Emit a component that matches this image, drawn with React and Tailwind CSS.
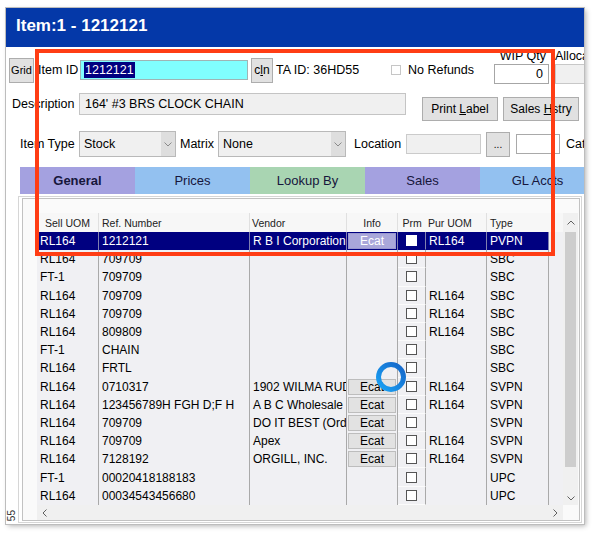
import React from 'react';

const rows = [
  ['RL164', '1212121', 'R B I Corporation', true, true, 'RL164', 'PVPN'],
  ['RL164', '709709', '', false, false, '', 'SBC'],
  ['FT-1', '709709', '', false, false, '', 'SBC'],
  ['RL164', '709709', '', false, false, 'RL164', 'SBC'],
  ['RL164', '709709', '', false, false, 'RL164', 'SBC'],
  ['RL164', '809809', '', false, false, 'RL164', 'SBC'],
  ['FT-1', 'CHAIN', '', false, false, '', 'SBC'],
  ['RL164', 'FRTL', '', false, false, '', 'SBC'],
  ['RL164', '0710317', '1902 WILMA RUDD', true, false, 'RL164', 'SVPN'],
  ['RL164', '123456789H FGH D;F H', 'A B C Wholesale', true, false, 'RL164', 'SVPN'],
  ['RL164', '709709', 'DO IT BEST (Order)', true, false, '', 'SVPN'],
  ['RL164', '709709', 'Apex', true, false, 'RL164', 'SVPN'],
  ['RL164', '7128192', 'ORGILL, INC.', true, false, 'RL164', 'SVPN'],
  ['FT-1', '00020418188183', '', false, false, '', 'UPC'],
  ['RL164', '00034543456680', '', false, false, '', 'UPC'],
];

const Btn = ({ className = '', children }) => (
  <div className={`flex shrink-0 items-center justify-center border border-[#adadad] bg-[#e1e1e1] text-black ${className}`}>
    <span className="whitespace-pre">{children}</span>
  </div>
);

const Chevron = ({ up, color = '#8a8a8a' }) => (
  <svg width="8" height="5" viewBox="0 0 8 5">
    <path d={up ? 'M0.5 4.5 L4 1 L7.5 4.5' : 'M0.5 0.5 L4 4 L7.5 0.5'} fill="none" stroke={color} strokeWidth="1" />
  </svg>
);

const Select = ({ w, children }) => (
  <div className={`flex h-[26px] shrink-0 border border-[#b9b9b9] bg-[#f0f0f0] ${w}`}>
    <div className="flex flex-1 items-center pl-[4px] text-[12.5px]">{children}</div>
    <div className="flex w-[14px] items-center justify-center bg-[#dedede]">
      <Chevron />
    </div>
  </div>
);

const Check = ({ sel }) => (
  <div
    className={`h-[11px] w-[11px] border ${
      sel ? 'border-white bg-white' : 'border-[#555] bg-white'
    }`}
  />
);

const cell = 'flex h-full shrink-0 items-center overflow-hidden whitespace-nowrap border-r';

const GridRow = ({ r, sel }) => (
  <div
    className={`flex h-[18.2px] text-[12px] ${
      sel ? 'bg-[#000080] text-white' : 'text-black'
    }`}
  >
    <div className={`${cell} w-[62px] pl-[3px] ${sel ? 'border-[#8080b0]' : 'border-[#a9a9a9]'}`}>{r[0]}</div>
    <div className={`${cell} w-[151px] pl-[3px] ${sel ? 'border-[#8080b0]' : 'border-[#a9a9a9]'}`}>{r[1]}</div>
    <div className={`${cell} w-[97px] pl-[3px] ${sel ? 'border-[#8080b0]' : 'border-[#a9a9a9]'}`}>{r[2]}</div>
    <div className={`${cell} w-[51px] pl-[1px] ${sel ? 'border-[#8080b0]' : 'border-[#a9a9a9]'}`}>
      {r[3] && (
        <div
          className={`flex h-[16px] w-[48px] items-center justify-center border ${
            sel ? 'border-[#9a98d0] bg-[#a9a7da] text-white' : 'border-[#bdbdbd] bg-[#e2e2e2] text-black'
          }`}
        >
          Ecat
        </div>
      )}
    </div>
    <div
      className={`${cell} w-[28px] justify-center border-b ${
        sel ? 'border-[#8080b0] border-b-[#000080]' : 'border-[#a9a9a9] border-b-[#fbfbfb]'
      }`}
    >
      <Check sel={sel} />
    </div>
    <div className={`${cell} w-[61px] pl-[3px] ${sel ? 'border-[#8080b0]' : 'border-[#a9a9a9]'}`}>{r[5]}</div>
    <div className={`${cell} w-[62px] pl-[3px] ${sel ? 'border-[#8080b0]' : 'border-[#a9a9a9]'}`}>{r[6]}</div>
    <div className="h-full flex-1 bg-[#f0f0f3]" />
  </div>
);

const tabs = [
  ['General', 'bg-[#a4a1e0]', true],
  ['Prices', 'bg-[#93c1f0]', false],
  ['Lookup By', 'bg-[#a9d5b2]', false],
  ['Sales', 'bg-[#a4a1e0]', false],
  ['GL Accts', 'bg-[#93c1f0]', false],
];

export default function App() {
  return (
    <div className="relative h-[534px] w-[593px] overflow-hidden bg-white pl-[6px] pt-[8px] font-['Liberation_Sans',Arial,sans-serif] text-black">
      <div className="flex h-[516px] w-[578px] flex-col overflow-hidden bg-white shadow-[0_0_0_1px_#bdbdbd,2px_2px_5px_rgba(0,0,0,0.3)]">
        {/* title bar */}
        <div className="flex h-[39px] shrink-0 items-center bg-[#0438a8] pb-[3px] pl-[10px] text-[17px] font-bold text-white">
          Item:1 - 1212121
        </div>

        {/* row 1 */}
        <div className="flex h-[46px] shrink-0 items-center text-[12.5px]">
          <Btn className="ml-[3px] h-[25px] w-[25px] text-[11px]">Grid</Btn>
          <div className="ml-[4px] w-[42px] shrink-0">Item ID</div>
          <div className="flex h-[20px] w-[168px] shrink-0 items-center border border-[#9fb5b5] bg-[#80ffff] pl-[3px]">
            <span className="bg-[#000080] px-[1px] leading-[16px] text-white">1212121</span>
          </div>
          <Btn className="ml-[3px] h-[25px] w-[22px] text-[12px]">
            c<span className="underline">l</span>n
          </Btn>
          <div className="ml-[3px] w-[115px] shrink-0">TA ID: 36HD55</div>
          <div className="h-[10px] w-[10px] shrink-0 border border-[#c6c6c6] bg-white" />
          <div className="ml-[7px] w-[86px] shrink-0">No Refunds</div>
          <div className="flex w-[55px] shrink-0 flex-col items-end self-start">
            <div className="mt-[2px] h-[14px] pr-[3px] leading-[14px]">WIP Qty</div>
            <div className="mt-[1px] flex h-[20px] w-[55px] items-center justify-end border border-[#a6a6a6] bg-white pr-[5px]">
              0
            </div>
          </div>
          <div className="ml-[6px] flex w-[40px] shrink-0 flex-col self-start">
            <div className="mt-[2px] h-[14px] whitespace-nowrap leading-[14px]">Allocated</div>
            <div className="mt-[1px] h-[20px] w-[40px] border border-[#c8c8c8] bg-[#f0f0f0]" />
          </div>
        </div>

        {/* row 2 */}
        <div className="flex h-[38px] shrink-0 items-start text-[12.5px]">
          <div className="ml-[6px] flex h-[22px] w-[67px] shrink-0 items-center">Description</div>
          <div className="flex h-[22px] w-[327px] shrink-0 items-center border border-[#c4c4c4] bg-[#f0f0f0] pl-[5px]">
            164' #3 BRS CLOCK CHAIN
          </div>
          <Btn className="ml-[16px] mt-[4px] h-[24px] w-[76px] text-[12px]">
            Print <span className="underline">L</span>abel
          </Btn>
          <Btn className="ml-[5px] mt-[4px] h-[24px] w-[76px] text-[12px]">
            Sales <span className="underline">H</span>stry
          </Btn>
        </div>

        {/* row 3 */}
        <div className="flex h-[26px] shrink-0 items-center text-[12.5px]">
          <div className="ml-[14px] w-[59px] shrink-0">Item Type</div>
          <Select w="w-[97px]">Stock</Select>
          <div className="ml-[4px] w-[38px] shrink-0">Matrix</div>
          <Select w="w-[128px]">None</Select>
          <div className="ml-[8px] w-[52px] shrink-0">Location</div>
          <div className="h-[20px] w-[75px] shrink-0 border border-[#cbcbcb] bg-[#f0f0f0]" />
          <Btn className="ml-[5px] h-[25px] w-[24px] text-[10px] text-[#555]">...</Btn>
          <div className="ml-[6px] h-[20px] w-[44px] shrink-0 border border-[#a9a9a9] bg-white" />
          <div className="ml-[6px] shrink-0">Cat</div>
        </div>

        {/* tabs */}
        <div className="ml-[14px] mt-[10px] flex h-[27px] shrink-0 text-[13px] text-[#16163c]">
          {tabs.map(([label, bg, bold]) => (
            <div key={label} className={`flex w-[115px] shrink-0 items-center justify-center ${bg} ${bold ? 'font-bold' : ''}`}>
              {label}
            </div>
          ))}
        </div>

        {/* lower section */}
        <div className="mt-[2px] flex shrink-0">
          <div className="flex w-[12px] shrink-0 flex-col items-center justify-end pb-[2px]">
            <div className="rotate-180 text-[10px] leading-[10px] text-[#333] [writing-mode:vertical-rl]">55</div>
          </div>
          <div className="h-[327px] w-[564px] shrink-0 border border-[#d6d6d6] bg-white pl-[3px] pt-[1px]">
            <div className="h-[323px] w-[558px] border border-[#c2c2c2] bg-[#fafafa] pl-[14px] pt-[14px]">
              <div className="flex">
                <div className="flex w-[526px] shrink-0 flex-col">
                  {/* header */}
                  <div className="flex h-[19px] bg-[#f7f7f7] text-[10.5px] text-[#222]">
                    <div className="flex w-[62px] shrink-0 items-center justify-center border-r border-[#e0e0e0] pt-[2px]">Sell UOM</div>
                    <div className="flex w-[151px] shrink-0 items-center border-r border-[#e0e0e0] pl-[3px] pt-[2px]">Ref. Number</div>
                    <div className="flex w-[97px] shrink-0 items-center border-r border-[#e0e0e0] pl-[2px] pt-[2px]">Vendor</div>
                    <div className="flex w-[51px] shrink-0 items-center justify-center border-r border-[#e0e0e0] pt-[2px]">Info</div>
                    <div className="flex w-[28px] shrink-0 items-center justify-center pt-[2px]">Prm</div>
                    <div className="flex w-[61px] shrink-0 items-center border-r border-[#e0e0e0] pl-[2px] pt-[2px]">Pur UOM</div>
                    <div className="flex w-[62px] shrink-0 items-center pl-[3px] pt-[2px]">Type</div>
                    <div className="flex-1" />
                  </div>
                  <div className="bg-[#f0f0f3]">
                    {rows.map((r, i) => (
                      <GridRow key={i} r={r} sel={i === 0} />
                    ))}
                  </div>
                </div>
                {/* vertical scrollbar */}
                <div className="flex h-[292px] w-[15px] shrink-0 flex-col items-center bg-[#f0f0f0]">
                  <div className="flex h-[19px] items-center">
                    <Chevron up color="#606060" />
                  </div>
                  <div className="h-[235px] w-[11px] bg-[#cdcdcd]" />
                  <div className="flex flex-1 items-end pb-[4px]">
                    <Chevron color="#606060" />
                  </div>
                </div>
              </div>
              {/* horizontal scrollbar */}
              <div className="flex h-[15px] w-[526px] items-center justify-between bg-[#f0f0f0] px-[5px]">
                <svg width="5" height="8" viewBox="0 0 5 8">
                  <path d="M4.5 0.5 L1 4 L4.5 7.5" fill="none" stroke="#606060" strokeWidth="1" />
                </svg>
                <svg width="5" height="8" viewBox="0 0 5 8">
                  <path d="M0.5 0.5 L4 4 L0.5 7.5" fill="none" stroke="#606060" strokeWidth="1" />
                </svg>
              </div>
            </div>
          </div>
        </div>
      </div>

      {/* annotation rectangle */}
      <div className="absolute left-[35px] top-[49px] h-[207px] w-[520px] border-4 border-[#ff3d14]" />

      {/* cursor highlight */}
      <svg className="absolute left-[376px] top-[362px]" width="30" height="30" viewBox="0 0 30 30">
        <defs>
          <linearGradient id="ring" x1="0" y1="1" x2="1" y2="0">
            <stop offset="0" stopColor="#1aa3f5" />
            <stop offset="1" stopColor="#1565c8" />
          </linearGradient>
        </defs>
        <circle cx="15" cy="15" r="12.5" fill="none" stroke="url(#ring)" strokeWidth="5" />
      </svg>
    </div>
  );
}
